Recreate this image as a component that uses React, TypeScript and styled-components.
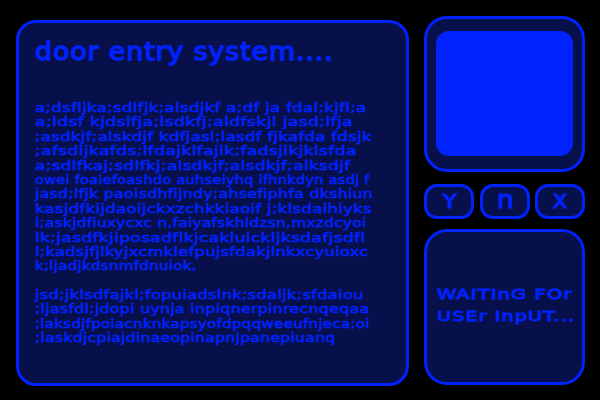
import React, { useLayoutEffect, useRef, useState } from "react";
import styled, { createGlobalStyle } from "styled-components";

const BLUE = "#0022ff";
const NAVY = "#08104c";

const GlobalStyle = createGlobalStyle`
  * { box-sizing: border-box; }
  body { margin: 0; background: #000; overflow: hidden; }
`;

const Screen = styled.main`
  display: flex;
  gap: 15px;
  width: 600px;
  height: 400px;
  padding: 16px 15px 15px 16px;
  background: #000;
  color: ${BLUE};
  font-family: "DejaVu Sans", sans-serif;
`;

const Panel = styled.section<{ $radius: number }>`
  border: 3px solid ${BLUE};
  border-radius: ${(p) => p.$radius}px;
  background: ${NAVY};
`;

const Console = styled(Panel)`
  width: 393px;
  height: 366px;
  margin-top: 4px;
  padding: 14px 0 0 16px;
`;

const Sidebar = styled.div`
  display: flex;
  flex-direction: column;
  width: 161px;
`;

const Monitor = styled(Panel)`
  height: 156px;
  padding: 12px 9px 13px;
`;

const Display = styled.div`
  height: 125px;
  border-radius: 13px;
  background: ${BLUE};
`;

const Keys = styled.div`
  display: flex;
  justify-content: space-between;
  margin: 12px 0 10px;
`;

const Key = styled.button<{ $size: number; $lift: number }>`
  display: flex;
  align-items: center;
  justify-content: center;
  width: 50px;
  height: 35px;
  padding: 0 0 ${(p) => p.$lift}px;
  border: 3px solid ${BLUE};
  border-radius: 13px;
  background: ${NAVY};
  color: ${BLUE};
  font: ${(p) => p.$size}px/1 "DejaVu Sans", sans-serif;
  -webkit-text-stroke: 1.2px ${BLUE};
`;

const Status = styled(Panel)`
  height: 156px;
  padding: 51px 0 0 10px;
`;

const Title = styled.h1`
  margin: 0;
  font-size: 25px;
  font-weight: normal;
  line-height: 30px;
  letter-spacing: 0.8px;
  -webkit-text-stroke: 1.3px ${BLUE};
`;

const Log = styled.div`
  margin-top: 34px;
  font-size: 12.5px;
  line-height: 14.4px;
  letter-spacing: 0.2px;
  -webkit-text-stroke: 0.5px ${BLUE};
`;

const LogRow = styled.div`
  height: 14.4px;
`;

const StatusRow = styled.div`
  height: 22px;
  font-size: 14.5px;
  line-height: 22px;
  letter-spacing: 0.8px;
  -webkit-text-stroke: 0.9px ${BLUE};
`;

const Stretch = styled.span`
  display: inline-block;
  white-space: pre;
  transform-origin: 0 50%;
`;

/* Stretches a run of text horizontally to an exact width. */
function Fitted({ text, width }: { text: string; width: number }) {
  const ref = useRef<HTMLSpanElement>(null);
  const [scale, setScale] = useState(1);
  useLayoutEffect(() => {
    if (ref.current) setScale(width / ref.current.offsetWidth);
  }, [text, width]);
  return (
    <Stretch ref={ref} style={{ transform: `scaleX(${scale})` }}>
      {text}
    </Stretch>
  );
}

const LOG: [string, number][] = [
  ["a;dsfljka;sdlfjk;alsdjkf a;df ja fdal;kjfl;a", 332],
  ["a;ldsf kjdslfja;lsdkfj;aldfskjl jasd;lfja", 318],
  [";asdkjf;alskdjf kdfjasl;lasdf fjkafda fdsjk", 337],
  [";afsdljkafds;lfdajklfajlk;fadsjlkjklsfda", 322],
  ["a;sdlfkaj;sdlfkj;alsdkjf;alsdkjf;alksdjf", 315],
  ["owei foaiefoashdo auhseiyhq ifhnkdyn asdj f", 335],
  ["jasd;lfjk paoisdhfijndy;ahsefiphfa dkshiun", 338],
  ["kasjdfkijdaoijckxzchkkiaoif j;klsdaihiyks", 337],
  ["l;askjdfiuxycxc n,faiyafskhldzsn,mxzdcyoi", 332],
  ["lk;jasdfkjiposadflkjcakluickljksdafjsdfl", 331],
  ["l;kadsjfjlkyjxcmklefpujsfdakjlnkxcyuioxc", 334],
  ["k;ljadjkdsnmfdnuiok,", 162],
  ["", 0],
  ["jsd;jklsdfajkl;fopuiadslnk;sdaljk;sfdaiou", 329],
  [";ljasfdl;jdopi uynja inpiqnerpinrecnqeqaa", 334],
  [";laksdjfpoiacnknkapsyofdpqqweeufnjeca;oi", 335],
  [";laskdjcpiajdinaeopinapnjpanepiuanq", 301],
];

export default function App() {
  return (
    <>
      <GlobalStyle />
      <Screen>
        <Console $radius={20}>
          <Title>
            <Fitted text="door entry system...." width={299} />
          </Title>
          <Log>
            {LOG.map(([text, width], i) => (
              <LogRow key={i}>{text && <Fitted text={text} width={width} />}</LogRow>
            ))}
          </Log>
        </Console>
        <Sidebar>
          <Monitor $radius={23}>
            <Display />
          </Monitor>
          <Keys>
            <Key $size={19} $lift={0}>
              <Fitted text="Y" width={14} />
            </Key>
            <Key $size={25} $lift={4}>
              <Fitted text="n" width={17} />
            </Key>
            <Key $size={19} $lift={0}>
              <Fitted text="X" width={14} />
            </Key>
          </Keys>
          <Status $radius={23}>
            <StatusRow>
              <Fitted text="WAITInG FOr" width={135} />
            </StatusRow>
            <StatusRow>
              <Fitted text="USEr InpUT..." width={138} />
            </StatusRow>
          </Status>
        </Sidebar>
      </Screen>
    </>
  );
}
